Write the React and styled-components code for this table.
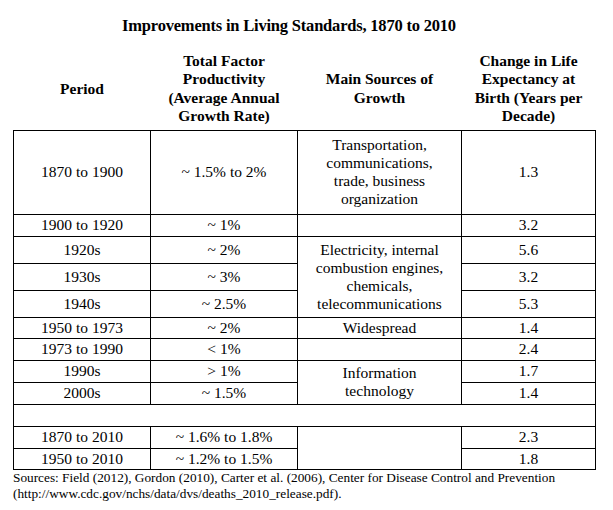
import React from "react";
import styled, { createGlobalStyle } from "styled-components";

const serif = `"Liberation Serif", "Times New Roman", serif`;

const GlobalStyle = createGlobalStyle`
  html, body {
    margin: 0;
    padding: 0;
    background: #fff;
  }
  body {
    font-family: ${serif};
    color: #000;
  }
`;

const Page = styled.div`
  width: 613px;
  height: 510px;
  padding: 0 0 0 13px;
  box-sizing: border-box;
  overflow: hidden;
`;

const Title = styled.h1`
  margin: 0;
  width: 582px;
  padding: 15px 30px 0 0;
  height: 52px;
  box-sizing: border-box;
  font-family: ${serif};
  font-size: 16.5px;
  letter-spacing: -0.2px;
  line-height: 22px;
  font-weight: bold;
  text-align: center;
`;

const Table = styled.table`
  width: 582px;
  border-collapse: collapse;
  table-layout: fixed;
  font-family: ${serif};
  font-size: 15.5px;
  line-height: 18px;
  color: #000;
`;

const HeadCell = styled.th`
  padding: 0 2px 4px;
  font-family: ${serif};
  font-size: 15.5px;
  line-height: 18.4px;
  font-weight: bold;
  text-align: center;
  vertical-align: middle;
`;

const Row = styled.tr`
  height: ${(p) => p.$h}px;
`;

const Cell = styled.td`
  border: 1px solid #000;
  padding: 0 4px;
  font-family: ${serif};
  font-size: 15.5px;
  line-height: 18px;
  text-align: center;
  vertical-align: middle;
  white-space: nowrap;
`;

const Sources = styled.p`
  margin: 0;
  font-family: ${serif};
  font-size: 13.3px;
  line-height: 16.5px;
`;

const rows = [
  { period: "1870 to 1900", tfp: "~ 1.5% to 2%", life: "1.3", h: 84, source: { text: ["Transportation,", "communications,", "trade, business", "organization"], span: 1 } },
  { period: "1900 to 1920", tfp: "~ 1%", life: "3.2", h: 22, source: { text: [], span: 1 } },
  { period: "1920s", tfp: "~ 2%", life: "5.6", h: 27, source: { text: ["Electricity, internal", "combustion engines,", "chemicals,", "telecommunications"], span: 3 } },
  { period: "1930s", tfp: "~ 3%", life: "3.2", h: 27 },
  { period: "1940s", tfp: "~ 2.5%", life: "5.3", h: 27 },
  { period: "1950 to 1973", tfp: "~ 2%", life: "1.4", h: 21, source: { text: ["Widespread"], span: 1 } },
  { period: "1973 to 1990", tfp: "< 1%", life: "2.4", h: 22, source: { text: [], span: 1 } },
  { period: "1990s", tfp: "> 1%", life: "1.7", h: 22, source: { text: ["Information", "technology"], span: 2 } },
  { period: "2000s", tfp: "~ 1.5%", life: "1.4", h: 22 },
];

const totals = [
  { period: "1870 to 2010", tfp: "~ 1.6% to 1.8%", life: "2.3", h: 22, first: true },
  { period: "1950 to 2010", tfp: "~ 1.2% to 1.5%", life: "1.8", h: 21 },
];

const Lines = ({ lines }) =>
  lines.map((l, i) => (
    <React.Fragment key={i}>
      {l}
      {i < lines.length - 1 && <br />}
    </React.Fragment>
  ));

export default function App() {
  return (
    <Page>
      <GlobalStyle />
      <Title>Improvements in Living Standards, 1870 to 2010</Title>
      <Table>
        <colgroup>
          <col style={{ width: 137 }} />
          <col style={{ width: 147 }} />
          <col style={{ width: 164 }} />
          <col style={{ width: 134 }} />
        </colgroup>
        <thead>
          <tr>
            <HeadCell>Period</HeadCell>
            <HeadCell>
              <Lines lines={["Total Factor", "Productivity", "(Average Annual", "Growth Rate)"]} />
            </HeadCell>
            <HeadCell>
              <Lines lines={["Main Sources of", "Growth"]} />
            </HeadCell>
            <HeadCell>
              <Lines lines={["Change in Life", "Expectancy at", "Birth (Years per", "Decade)"]} />
            </HeadCell>
          </tr>
        </thead>
        <tbody>
          {rows.map((r) => (
            <Row key={r.period} $h={r.h}>
              <Cell>{r.period}</Cell>
              <Cell>{r.tfp}</Cell>
              {r.source && (
                <Cell rowSpan={r.source.span}>
                  <Lines lines={r.source.text} />
                </Cell>
              )}
              <Cell>{r.life}</Cell>
            </Row>
          ))}
          <Row $h={22}>
            <Cell colSpan={4} />
          </Row>
          {totals.map((r) => (
            <Row key={r.period} $h={r.h}>
              <Cell>{r.period}</Cell>
              <Cell>{r.tfp}</Cell>
              {r.first && <Cell rowSpan={2} />}
              <Cell>{r.life}</Cell>
            </Row>
          ))}
        </tbody>
      </Table>
      <Sources>
        Sources: Field (2012), Gordon (2010), Carter et al. (2006), Center for Disease Control and Prevention
        <br />
        (http://www.cdc.gov/nchs/data/dvs/deaths_2010_release.pdf).
      </Sources>
    </Page>
  );
}
